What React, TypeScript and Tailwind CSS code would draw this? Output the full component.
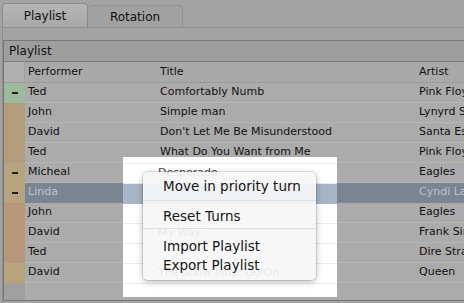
import React from 'react';

type Row = {
  mark?: boolean;
  cell: string;
  performer: string;
  title: string;
  artist: string;
  selected?: boolean;
};

const rows: Row[] = [
  { mark: true, cell: 'bg-[#9dbb9c]', performer: 'Ted', title: 'Comfortably Numb', artist: 'Pink Floyd' },
  { cell: 'bg-[#b39c7c]', performer: 'John', title: 'Simple man', artist: 'Lynyrd Skynyrd' },
  { cell: 'bg-[#b39c7c]', performer: 'David', title: "Don't Let Me Be Misunderstood", artist: 'Santa Esmeralda' },
  { cell: 'bg-[#b39c7c]', performer: 'Ted', title: 'What Do You Want from Me', artist: 'Pink Floyd' },
  { mark: true, cell: 'bg-[#b8a37f]', performer: 'Micheal', title: 'Desperado', artist: 'Eagles' },
  { mark: true, cell: 'bg-[#b8a37f]', performer: 'Linda', title: 'Time After Time', artist: 'Cyndi Lauper', selected: true },
  { cell: 'bg-[#b7977a]', performer: 'John', title: 'Hotel California', artist: 'Eagles' },
  { cell: 'bg-[#b7977a]', performer: 'David', title: 'My Way', artist: 'Frank Sinatra' },
  { cell: 'bg-[#b7977a]', performer: 'Ted', title: 'Sultans of Swing', artist: 'Dire Straits' },
  { cell: 'bg-[#b8a37f]', performer: 'David', title: 'The Show Must Go On', artist: 'Queen' },
];

// titles that show through the white spotlight / translucent menu
const lit = ['Desperado', '', '', 'My Way', '', 'The Show Must Go On'];

function Dash() {
  return <div className="w-[6px] h-[2px] bg-[#1e1e1e]" />;
}

export default function App() {
  return (
    <div className="relative w-[464px] h-[303px] overflow-hidden bg-[#a3a3a3] font-['DejaVu_Sans',sans-serif] text-[#111]">
      {/* tabs */}
      <div className="flex items-end h-[27px] pl-[2px] pt-[3px]">
        <div className="h-[24px] w-[86px] flex items-center justify-center rounded-t-[4px] border border-b-0 border-[#8a8a8a] bg-gradient-to-b from-[#b6b6b6] to-[#a8a8a8] text-[12px]">
          Playlist
        </div>
        <div className="h-[22px] w-[95px] flex items-center justify-center rounded-t-[4px] border border-b-0 border-l-0 border-[#929292] bg-[#a1a1a1] text-[12px]">
          Rotation
        </div>
      </div>

      {/* tab body */}
      <div className="ml-[2px] border-t border-l border-[#8e8e8e] pt-[12px] h-[276px]">
        <div className="border-t border-l border-b border-[#767676] h-[261px] flex flex-col overflow-hidden">
          <div className="h-[21px] shrink-0 flex items-center pl-[5px] bg-[#9e9e9e] border-b border-[#7d7d7d] text-[12px]">
            Playlist
          </div>
          <div className="h-[21px] shrink-0 flex items-center bg-[#a9a9a9] border-b border-[#9a9a9a] text-[11px]">
            <div className="w-[21px] shrink-0 h-full bg-[#b0b0b0] border-r border-[#a0a0a0]" />
            <div className="w-[131px] shrink-0 pl-[3px]">Performer</div>
            <div className="w-[259px] shrink-0 pl-[4px]">Title</div>
            <div className="shrink-0 pl-[4px]">Artist</div>
          </div>
          {rows.map((r, i) => (
            <div
              key={i}
              className={
                'h-[20px] shrink-0 flex items-center text-[11px] border-b ' +
                (r.selected ? 'bg-[#7b8592] border-[#7b8592] text-[#bcc3cc]' : 'bg-[#ababab] border-[#b7b7b7]')
              }
            >
              <div className={'w-[21px] h-[20px] shrink-0 flex items-center justify-center ' + r.cell}>
                {r.mark && <Dash />}
              </div>
              <div className="w-[131px] shrink-0 pl-[3px] whitespace-nowrap">{r.performer}</div>
              <div className="w-[259px] shrink-0 pl-[4px] whitespace-nowrap">{r.title}</div>
              <div className="shrink-0 pl-[4px] whitespace-nowrap">{r.artist}</div>
            </div>
          ))}
          <div className="flex-1 flex bg-[#ababab]">
            <div className="w-[21px] bg-[#a0a0a0]" />
          </div>
        </div>
      </div>

      {/* spotlight around the context menu */}
      <div className="absolute left-[123px] top-[157px] w-[214px] h-[140px] bg-white overflow-hidden">
        <div className="mt-[6px] border-t border-[#ececec]">
          {lit.map((t, i) => (
            <div
              key={i}
              className={
                'h-[20px] flex items-center pl-[35px] text-[11px] whitespace-nowrap border-b ' +
                (i === 1 ? 'bg-[#a8b5c6] border-[#a8b5c6]' : 'border-[#ececec] text-[#444]')
              }
            >
              {t}
            </div>
          ))}
        </div>
      </div>

      {/* context menu */}
      <div className="absolute left-[143px] top-[172px] w-[173px] h-[108px] rounded-[5px] bg-[#f6f6f6]/[0.92] shadow-[0_2px_7px_rgba(0,0,0,0.28)] ring-1 ring-black/10 text-[13.5px] text-[#151515] pt-[4px]">
        <div className="h-[20px] flex items-center pl-[20px] whitespace-nowrap">Move in priority turn</div>
        <div className="h-[10px] pt-[4px]">
          <div className="h-px bg-[#dedede]" />
        </div>
        <div className="h-[20px] flex items-center pl-[20px]">Reset Turns</div>
        <div className="h-[11px] pt-[2px]">
          <div className="h-px bg-[#dedede]" />
        </div>
        <div className="h-[19px] flex items-center pl-[20px]">Import Playlist</div>
        <div className="h-[19px] flex items-center pl-[20px]">Export Playlist</div>
      </div>
    </div>
  );
}
